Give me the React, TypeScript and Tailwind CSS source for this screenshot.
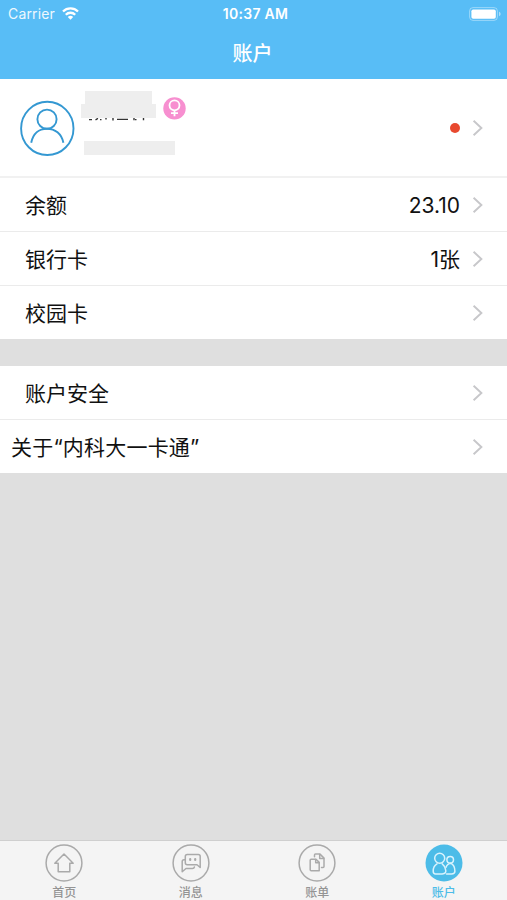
import type { ReactNode } from "react";

type RowProps = {
  label: string;
  value?: string;
  className?: string;
};

function Chevron() {
  return (
    <svg width="12" height="18" viewBox="0 0 12 18" fill="none" className="shrink-0">
      <path d="M1.600 1.800 9.400 9 1.600 16.200" stroke="#c7c7ca" strokeWidth="1.900" />
    </svg>
  );
}

function Row({ label, value, className = "h-[54px] border-b pl-[25px]" }: RowProps) {
  return (
    <div
      className={`flex items-center border-[#ebebeb] bg-white pr-[23px] text-[21px] leading-none text-[#111] ${className}`}
    >
      <span className="flex-1 whitespace-nowrap pt-px">{label}</span>
      {value && <span className="mr-[12px] pt-px">{value}</span>}
      <Chevron />
    </div>
  );
}

function StatusBar() {
  return (
    <div className="grid h-[27px] grid-cols-3 items-center pl-[8px] pr-[6px] text-white">
      <div className="flex items-center gap-[7px]">
        <span className="pt-px text-[14px] leading-none tracking-[0.15px] opacity-90">Carrier</span>
        <svg width="17" height="13" viewBox="0 0 17 13" fill="none" stroke="#fff" strokeWidth="2.3">
          <path d="M1 4.500a10.700 10.700 0 0 1 15 0" />
          <path d="M3.800 7.700a6.700 6.700 0 0 1 9.400 0" />
          <path d="M8.500 12.800 5.800 10a3.900 3.900 0 0 1 5.400 0z" fill="#fff" stroke="none" />
        </svg>
      </div>
      <span className="pl-[2px] pt-px text-center text-[14px] font-semibold leading-none tracking-[0.3px]">
        10:37 AM
      </span>
      <svg width="33" height="14" viewBox="0 0 33 14" fill="none" className="justify-self-end">
        <rect x="1.600" y="0.600" width="27.800" height="12.800" rx="3.400" stroke="#fff" strokeOpacity="0.4" />
        <rect x="3.400" y="2.400" width="24.400" height="9.400" rx="1.800" fill="#fff" />
        <path d="M31 4.800c1.200.4 1.600 1.200 1.600 2.200s-.4 1.800-1.600 2.200z" fill="#fff" fillOpacity="0.5" />
      </svg>
    </div>
  );
}

function Profile() {
  return (
    <div className="flex h-[99px] items-center border-b-2 border-[#f1f1f1] bg-white pl-[20px] pr-[23px]">
      <svg width="55" height="56" viewBox="0 0 55 56" fill="none" stroke="#3498d2" className="shrink-0">
        <ellipse cx="27.300" cy="28.400" rx="26.200" ry="26.600" strokeWidth="1.900" />
        <circle cx="27" cy="19.200" r="9.600" strokeWidth="1.900" />
        <path d="M11.200 42.800C13 33.600 19 28.700 27 28.700s14.600 4.900 16.400 14.100" strokeWidth="1.900" />
      </svg>

      {/* hidden name and number */}
      <div className="ml-[6px] h-[73px] w-[75px] shrink-0">
        <div className="ml-[4px] h-[13px] w-[67px] bg-[#eeeeee]" />
        <div className="h-[14px] w-[75px] bg-[#eeeeee]" />
        <svg width="75" height="5" viewBox="0 0 75 5" fill="none" stroke="#333" strokeWidth="1.400">
          <path d="M8 1.600h3M14.500 1.800 17 .4M19 1.600h1.500M25 0v1.600M32 0v2.600M36 1.400h11M53 0v2.200M54 1.600h1.500M62.500 0v2.200" />
        </svg>
        <div className="mt-[18px] ml-[3px] h-[14px] w-[91px] bg-[#eeeeee]" />
      </div>

      <svg width="24" height="24" viewBox="0 0 24 24" fill="none" className="mb-[39px] ml-[6px] shrink-0">
        <circle cx="12.500" cy="12.400" r="11.200" fill="#f78fd0" />
        <g stroke="#fff" strokeWidth="1.800">
          <circle cx="12.500" cy="9.300" r="5" />
          <path d="M12.500 14.400v5.800M9 17.200h7" />
        </g>
      </svg>

      <span className="ml-auto mr-[12px] size-[10px] rounded-full bg-[#e8492f]" />
      <Chevron />
    </div>
  );
}

function Tab({ label, active, children }: { label: string; active?: boolean; children: ReactNode }) {
  return (
    <div
      className={`flex flex-1 flex-col items-center pt-[3px] ${active ? "text-[#4cbce8]" : "text-[#949494]"}`}
    >
      <svg
        width="38"
        height="38"
        viewBox="0 0 38 38"
        fill="none"
        stroke={active ? "#d9f3fd" : "#aaaaaa"}
        strokeWidth="1.500"
        strokeLinejoin="round"
        strokeLinecap="round"
        className="shrink-0"
      >
        {active ? (
          <circle cx="19" cy="19" r="18.500" fill="#4cbce8" stroke="none" />
        ) : (
          <circle cx="19" cy="19" r="17.900" />
        )}
        {children}
      </svg>
      <span className="mt-[4px] text-[12px] font-medium leading-[14px]">{label}</span>
    </div>
  );
}

function TabBar() {
  return (
    <nav className="flex h-[60px] border-t border-[#cfcfcf] bg-[#f4f4f4] pl-px">
      <Tab label="首页">
        <path d="M19 10 9.800 19.200h3.400v8.600h11.600v-8.600h3.400z" />
      </Tab>
      <Tab label="消息">
        <path d="M15.300 10.500h10.900a2 2 0 0 1 2 2v11l-3.200-2.700h-9.700a2 2 0 0 1-2-2v-6.300a2 2 0 0 1 2-2z" />
        <path d="M13 15.800h-1a1.800 1.800 0 0 0-1.800 1.800v10.200l3.800-3.300h6.500a2 2 0 0 0 1.900-1.500" />
        <path d="M18.200 15v1M23.200 15v1" strokeWidth="2.200" />
      </Tab>
      <Tab label="账单">
        <path d="M13.200 15.200h4.800l3.200 3.200v8.400h-8a1 1 0 0 1-1-1v-9.600a1 1 0 0 1 1-1z" />
        <path d="M17.700 15.400v3.300h3.300" />
        <path d="M16.500 12.700v-1.600a1 1 0 0 1 1-1H22l4 4v8.400a1 1 0 0 1-1 1h-1.500" />
        <path d="M21.700 10.400v4h4" />
      </Tab>
      <Tab label="账户" active>
        <circle cx="14.700" cy="14.300" r="5" />
        <circle cx="25.200" cy="15.800" r="3.300" />
        <path d="M12 19.800c-2.600 1.500-3.900 4-3.800 7.400 0 1.700 1 2.700 2.400 2.700h6.600c3 0 4-1.600 3.500-3.900-.5-2.700-1.700-4.900-3.500-6.200" />
        <path d="M21.500 29.900h5c2 0 3.400-.9 3.400-2.700 0-3.500-1-6.300-3.700-7.900-2.600.2-4.300 1.500-5.200 4" />
      </Tab>
    </nav>
  );
}

export default function App() {
  return (
    <div className="flex h-[900px] w-[507px] flex-col overflow-hidden bg-[#dfdfdf] font-['Inter','Noto_Sans_CJK_SC',sans-serif]">
      <header className="h-[79px] shrink-0 bg-[#58bdf6]">
        <StatusBar />
        <h1 className="pt-[12px] pr-[2px] text-center text-[20px] font-medium leading-[30px] text-white">
          账户
        </h1>
      </header>

      <main className="flex-1">
        <Profile />
        <Row label="余额" value="23.10" />
        <Row label="银行卡" value="1张" />
        <Row label="校园卡" className="h-[53px] pl-[25px]" />
        <div className="h-[27px]" />
        <Row label="账户安全" />
        <Row label="关于“内科大一卡通”" className="h-[53px] pl-[11px] tracking-[0.2px]" />
      </main>

      <TabBar />
    </div>
  );
}
